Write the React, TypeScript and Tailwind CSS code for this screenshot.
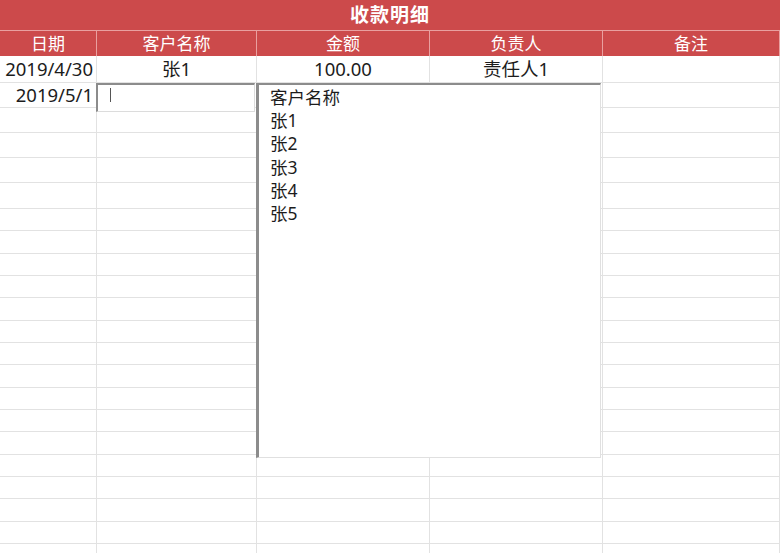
import React from 'react';

const cols = ['日期', '客户名称', '金额', '负责人', '备注'];
const gridCols = 'grid grid-cols-[97px_160px_173px_173px_1fr]';

// row heights taken from the sheet: first rows are taller, the rest are default height
const bodyRows = [27, 25, 25, 25, 25, 26, ...Array(16).fill(22.33)];

const data: Record<number, string[]> = {
  0: ['2019/4/30', '张1', '100.00', '责任人1', ''],
  1: ['2019/5/1', '', '', '', ''],
};

const options = ['客户名称', '张1', '张2', '张3', '张4', '张5'];

const font = { fontFamily: "'Noto Sans', 'Noto Sans CJK SC', sans-serif" };

export default function App() {
  return (
    <div className="relative w-[780px] h-[553px] overflow-hidden bg-white text-[#1c1c1c]" style={font}>
      {/* 标题 */}
      <div className="h-[31px] bg-[#cc4a4b] border-b border-[#e9a0a0] flex items-center justify-center">
        <span className="text-white font-bold text-[19px] tracking-[1px]">收款明细</span>
      </div>

      {/* 表头 */}
      <div className={`${gridCols} h-[25px] bg-[#cc4a4b]`}>
        {cols.map((c) => (
          <div key={c} className="border-r border-[#e9a0a0] flex items-center justify-center text-white text-[17px] leading-none">
            {c}
          </div>
        ))}
      </div>

      {/* 数据区 */}
      {bodyRows.map((h, i) => (
        <div key={i} className={gridCols} style={{ height: h }}>
          {cols.map((_, j) => {
            const v = data[i]?.[j] ?? '';
            return (
              <div
                key={j}
                className={`border-r border-b border-[#e2e2e2] flex items-center text-[18.5px] leading-none ${
                  j === 0 ? 'justify-end pr-[3px]' : 'justify-center'
                }`}
              >
                {v}
              </div>
            );
          })}
        </div>
      ))}

      {/* 编辑中的单元格 */}
      <div className="absolute left-[96px] top-[83px] w-[159px] h-[29px] bg-white border-t-2 border-l-2 border-[#8c8c8c] border-r border-b border-r-[#dcdcdc] border-b-[#dcdcdc]">
        <div className="absolute left-[12px] top-[3px] w-px h-[14px] bg-[#555]" />
      </div>

      {/* 下拉列表 */}
      <div className="absolute left-[256px] top-[83px] w-[345px] h-[375px] bg-white border-t-2 border-l-[3px] border-[#8c8c8c] border-r border-b border-r-[#e0e0e0] border-b-[#e0e0e0] pl-[11px] pt-[1px]">
        {options.map((o) => (
          <div key={o} className="h-[23.3px] flex items-center text-[17.5px] leading-none">
            {o}
          </div>
        ))}
      </div>
    </div>
  );
}
